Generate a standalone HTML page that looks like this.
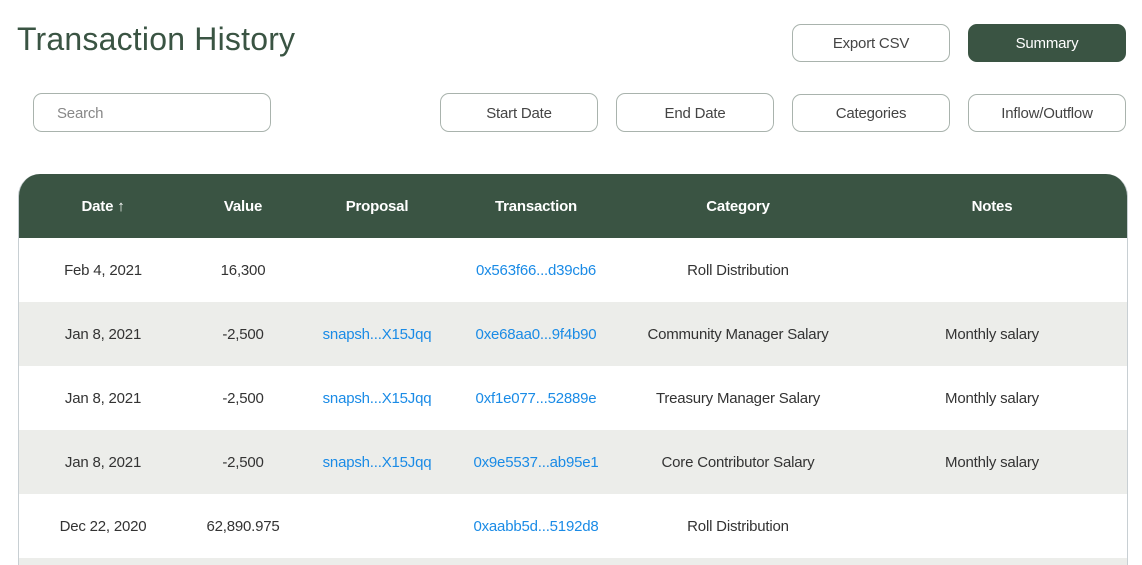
<!DOCTYPE html>
<html><head><style>
html,body{margin:0;width:1142px;height:565px;overflow:hidden;background:#fff;font-family:"Liberation Sans",sans-serif;color:#2b2b2b;position:relative}
.t{position:absolute;left:17px;top:21px;font-size:32px;color:#3a5443;letter-spacing:0.2px}
.b{position:absolute;box-sizing:border-box;border:1px solid #a9b3ad;border-radius:9px;display:flex;align-items:center;justify-content:center;font-size:15px;color:#444;letter-spacing:-0.2px;padding-top:1px}
.s{background:#3a5443;color:#fff;border-color:#3a5443}
.tbl{position:absolute;left:18px;top:174px;width:1108px;height:391px;border-left:1px solid #c8cfd3;border-right:1px solid #c8cfd3;overflow:hidden;border-radius:22px 22px 0 0}
.h{height:64px;background:#3a5443;color:#fff;font-weight:bold;position:relative;font-size:15px}
.r{height:64px;position:relative;font-size:15px;color:#333}
.g{background:#ecedea}
.c{position:absolute;top:1px;height:64px;line-height:64px;transform:translateX(-50%);white-space:nowrap;letter-spacing:-0.2px}
.a{color:#1a8be6}
</style></head><body>
<div class="t">Transaction History</div>
<div class="b" style="left:792px;top:24px;width:158px;height:38px">Export CSV</div>
<div class="b s" style="left:968px;top:24px;width:158px;height:38px">Summary</div>
<div class="b" style="left:33px;top:93px;width:238px;height:39px;justify-content:flex-start;padding-left:23px;color:#888">Search</div>
<div class="b" style="left:440px;top:93px;width:158px;height:39px">Start Date</div>
<div class="b" style="left:616px;top:93px;width:158px;height:39px">End Date</div>
<div class="b" style="left:792px;top:94px;width:158px;height:38px">Categories</div>
<div class="b" style="left:968px;top:94px;width:158px;height:38px">Inflow/Outflow</div>
<div class="tbl">
<div class="h"><span class="c" style="left:84px">Date ↑</span><span class="c" style="left:224px">Value</span><span class="c" style="left:358px">Proposal</span><span class="c" style="left:517px">Transaction</span><span class="c" style="left:719px">Category</span><span class="c" style="left:973px">Notes</span></div>
<div class="r"><span class="c" style="left:84px">Feb 4, 2021</span><span class="c" style="left:224px">16,300</span><span class="c a" style="left:517px">0x563f66...d39cb6</span><span class="c" style="left:719px">Roll Distribution</span></div>
<div class="r g"><span class="c" style="left:84px">Jan 8, 2021</span><span class="c" style="left:224px">-2,500</span><span class="c a" style="left:358px">snapsh...X15Jqq</span><span class="c a" style="left:517px">0xe68aa0...9f4b90</span><span class="c" style="left:719px">Community Manager Salary</span><span class="c" style="left:973px">Monthly salary</span></div>
<div class="r"><span class="c" style="left:84px">Jan 8, 2021</span><span class="c" style="left:224px">-2,500</span><span class="c a" style="left:358px">snapsh...X15Jqq</span><span class="c a" style="left:517px">0xf1e077...52889e</span><span class="c" style="left:719px">Treasury Manager Salary</span><span class="c" style="left:973px">Monthly salary</span></div>
<div class="r g"><span class="c" style="left:84px">Jan 8, 2021</span><span class="c" style="left:224px">-2,500</span><span class="c a" style="left:358px">snapsh...X15Jqq</span><span class="c a" style="left:517px">0x9e5537...ab95e1</span><span class="c" style="left:719px">Core Contributor Salary</span><span class="c" style="left:973px">Monthly salary</span></div>
<div class="r"><span class="c" style="left:84px">Dec 22, 2020</span><span class="c" style="left:224px">62,890.975</span><span class="c a" style="left:517px">0xaabb5d...5192d8</span><span class="c" style="left:719px">Roll Distribution</span></div>
<div class="r g" style="height:7px"></div>
</div>
</body></html>
